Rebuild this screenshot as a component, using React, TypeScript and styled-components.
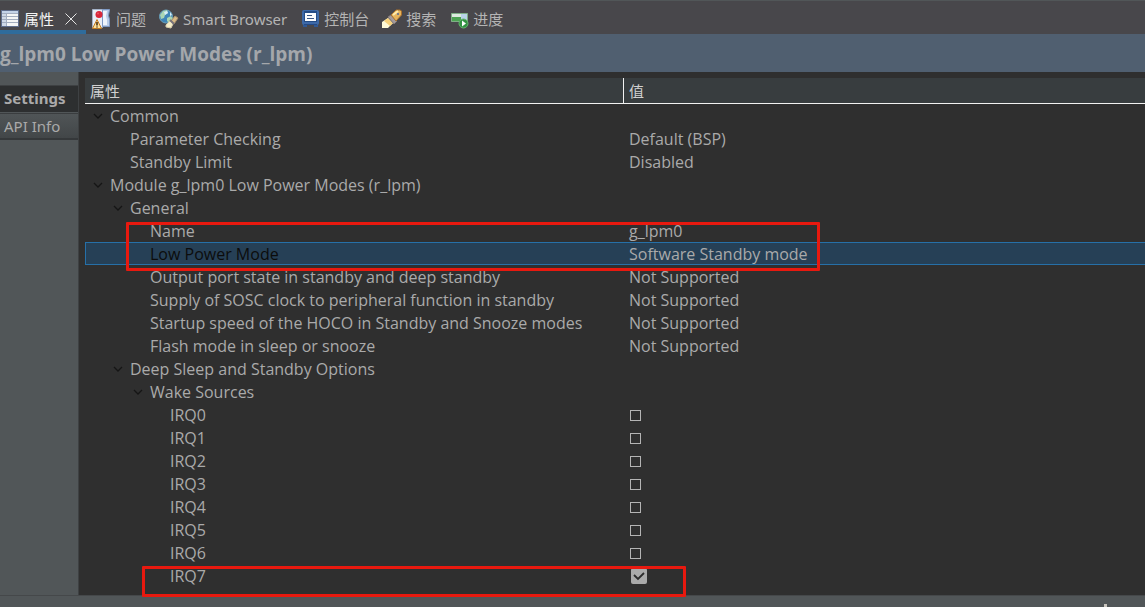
import React, { useState } from "react";
import styled, { createGlobalStyle, css } from "styled-components";

const GlobalStyle = createGlobalStyle`
  * { box-sizing: border-box; }
  body {
    margin: 0;
    background: #515658;
    color: #aaaaaa;
    font-family: "Noto Sans", "Noto Sans CJK SC", sans-serif;
    font-size: 15px;
  }
  button { font: inherit; color: inherit; border: 0; padding: 0; background: none; }
`;

const Page = styled.div`
  min-height: 100vh;
  display: flex;
  flex-direction: column;
`;

const TabBar = styled.div`
  display: flex;
  height: 34px;
  background: #48474b;
  border-top: 1px solid #515658;
`;

const TabShell = styled.div<{ $active?: boolean }>`
  display: flex;
  align-items: center;
  gap: 11px;
  padding: ${(p) => (p.$active ? "6px 9px 0 0" : "6px 7px 0 6px")};
  color: ${(p) => (p.$active ? "#f4f4f4" : "#b4b4b4")};
  border-bottom: 4px solid ${(p) => (p.$active ? "#2f6c9c" : "transparent")};
`;

const TabButton = styled.button`
  display: flex;
  align-items: center;
  gap: 4px;
  line-height: 20px;
  white-space: nowrap;
`;

const CloseButton = styled.button`
  display: flex;
`;

const TitleBar = styled.h1`
  margin: 0;
  height: 38px;
  padding-top: 2px;
  background: #505f70;
  color: #a4a7ab;
  font-family: "Open Sans", "Noto Sans CJK SC", sans-serif;
  font-size: 19px;
  font-weight: 700;
  line-height: 36px;
`;

const Body = styled.div`
  flex: 1;
  display: flex;
`;

const SideTabs = styled.nav`
  flex: none;
  width: 79px;
  padding-top: 13px;
  border-right: 1px solid #3e4143;
`;

const SideTab = styled.button<{ $active?: boolean }>`
  display: block;
  width: 100%;
  height: 27px;
  padding-left: 4px;
  text-align: left;
  line-height: 24px;
  ${(p) =>
    p.$active
      ? css`
          padding-bottom: 2px;
          background: #2d2f30;
          border-top: 1px solid #3e4143;
          font-weight: 700;
        `
      : css`
          margin-top: 1px;
          background: linear-gradient(#505557, #424648);
          border-top: 1px solid #3a3d3f;
          border-bottom: 2px solid #35383a;
        `}
`;

const Panel = styled.main`
  position: relative;
  flex: 1;
  min-width: 0;
  padding: 6px 0 8px 6px;
  background: #2f2f2f;
`;

const PropertyTable = styled.table`
  width: 100%;
  table-layout: fixed;
  border-collapse: separate;
  border-spacing: 0;
`;

const NameColumn = styled.col`
  width: 538px;
`;

const HeadCell = styled.th`
  height: 26px;
  padding: 2px 5px 0;
  background: #383d3f;
  border-bottom: 1px solid #f2f2f2;
  color: #d0d0d0;
  font-weight: 400;
  line-height: 23px;
  text-align: left;
  & + & { border-left: 1px solid #f2f2f2; }
`;

const Cell = styled.td<{ $selected?: boolean }>`
  height: 23px;
  padding: 1px 6px 0;
  font-family: "Open Sans", "Noto Sans CJK SC", sans-serif;
  font-size: 16px;
  line-height: 20px;
  border: solid transparent;
  border-width: 1px 0;
  white-space: nowrap;
  ${(p) =>
    p.$selected &&
    css`
      background: #264056;
      border-color: #2670a8;
    `}
`;

const NameCell = styled(Cell)<{ $level: number }>`
  padding: 1px 0 0 ${(p) => 4 + p.$level * 20}px;
  border-left-width: 1px;
  color: ${(p) => (p.$selected ? "#0c0c0c" : "inherit")};
`;

const NameContent = styled.label`
  display: flex;
  align-items: center;
`;

const Toggle = styled.span`
  flex: none;
  display: flex;
  width: 20px;
  padding-left: 2px;
`;

const Check = styled.input`
  appearance: none;
  display: block;
  width: 11px;
  height: 11px;
  margin: 0 1px;
  border: 1px solid #b4b4b4;
  &:checked {
    width: 16px;
    height: 16px;
    margin: 0 2px;
    border: 0;
    border-radius: 2px;
    background: #aaaaaa;
  }
`;

const CheckWrap = styled.span`
  position: relative;
  display: block;
`;

const Tick = styled.svg`
  position: absolute;
  left: 2px;
  top: 0;
  pointer-events: none;
`;

const Highlight = styled.div<{ $left: number; $top: number; $width: number; $height: number }>`
  position: absolute;
  left: ${(p) => p.$left}px;
  top: ${(p) => p.$top}px;
  width: ${(p) => p.$width}px;
  height: ${(p) => p.$height}px;
  border: 3px solid #e8190f;
  border-radius: 1px;
  pointer-events: none;
`;

const StatusBar = styled.footer`
  display: flex;
  justify-content: flex-end;
  align-items: flex-end;
  height: 12px;
  padding-right: 38px;
  border-top: 1px solid #45484a;
`;

const Grip = styled.span`
  width: 3px;
  height: 3px;
  background: #c8c4bd;
`;

const PropertiesIcon = () => (
  <svg width="20" height="20" viewBox="0 0 20 20" aria-hidden="true">
    <path fill="#5f6d8c" d="M1 1h18v17H1z" />
    <path fill="#c3d2e8" d="M2 2h16v3H2z" />
    <path fill="#f4f5f6" d="M2 5h16v12H2z" />
    <path fill="#cfd8e6" d="M2 5h4v12H2z" />
    <path stroke="#a3adbf" d="M2 4.500h16M2 7.500h16M2 10.500h16M2 13.500h16M6.500 4v13" />
  </svg>
);

const ProblemsIcon = () => (
  <svg width="20" height="20" viewBox="0 0 20 20" aria-hidden="true">
    <path fill="#e9eef6" stroke="#a5b3c9" d="M.500 .5h10v18h-10z" />
    <path fill="#b9cce8" stroke="#7e99c4" d="M10.500 .5h7l-1 6 1 4v7h-7z" />
    <path fill="#eef4fc" d="M11 2h4l-1 5 1 4v5h-4z" />
    <circle cx="7" cy="5.500" r="3.500" fill="#d9273a" />
    <circle cx="6" cy="4.500" r="1" fill="#e85560" />
    <path fill="#ffe39a" stroke="#c17b23" strokeLinejoin="round" d="M5 10.500 9.500 19.500H.5z" />
    <path stroke="#3b2710" strokeWidth="1.500" d="M5 13v3.500M5 17.500v1" />
  </svg>
);

const BrowserIcon = () => (
  <svg width="20" height="20" viewBox="0 0 20 20" aria-hidden="true">
    <circle cx="7" cy="7.500" r="6.500" fill="#3e85b8" stroke="#6da4bd" />
    <path fill="#a9d5b4" d="M1 6 4 2l4-1 1 3-3 2-1 3-3 1zM8 9l4-2 2 3-4 4-2-2z" />
    <path fill="#d6edfa" d="M5 3l3-1 1 2-3 2zM11 3l2 3-2 1z" />
    <path fill="#f5edc7" stroke="#d8ccab" d="m7 16 4-4 3 3-2 4-5-1z" />
    <path fill="#d9ba87" stroke="#a68f6c" d="m12 12 4-5 3 2-4 6z" />
    <path stroke="#77727a" strokeWidth="2" d="m11 11 4 4" />
  </svg>
);

const ConsoleIcon = () => (
  <svg width="20" height="20" viewBox="0 0 20 20" aria-hidden="true">
    <rect x="2" y="1" width="17" height="15" rx="2" fill="#3d69a8" />
    <path fill="#244c86" d="M4 2h13v11H4z" />
    <path fill="#fafcfe" d="M5 4h11v8H5z" />
    <path stroke="#3a5686" d="M7 6.500h5M7 9.500h7" />
    <path fill="#254983" d="M4 15h13v1H4z" />
    <path fill="#2f5894" d="M3 16h4v2H3zM14 16h4v2h-4z" />
  </svg>
);

const SearchIcon = () => (
  <svg width="20" height="20" viewBox="0 0 20 20" aria-hidden="true">
    <path fill="#fffbd8" d="m0 13 6-4 5 5-5 5H0z" />
    <path fill="#f7d27c" d="m2 12 4-3 5 5-3 3z" />
    <path fill="#a49b9b" stroke="#837a7a" d="m6 8 3-2 6 6-3 3z" />
    <path fill="#e6b45d" stroke="#a8702c" d="m9 6 5-5h4l1.500 1v4L14 12z" />
    <path stroke="#ffebaa" strokeWidth="2" d="m11 6 5-4" />
    <circle cx="16" cy="5" r="1" fill="#52699b" />
  </svg>
);

const ProgressIcon = () => (
  <svg width="20" height="20" viewBox="0 0 20 20" aria-hidden="true">
    <path fill="#dceadf" stroke="#7faf86" d="M2.500 4.500h16v8h-16z" />
    <path fill="#4ca353" d="M3 8h9v4H3z" />
    <path fill="#b8d3e8" d="M12 5h6v7h-6z" />
    <circle cx="14.500" cy="14.500" r="4.500" fill="#329342" stroke="#65b66e" />
    <path fill="#fff" d="m13 11.500 4 3-4 3z" />
  </svg>
);

const Chevron = () => (
  <svg width="12" height="10" viewBox="0 0 12 10" aria-hidden="true">
    <path d="m2 3 4 4 4-4" fill="none" stroke="#151515" strokeWidth="1.300" />
  </svg>
);

const views: { label: string; Icon: React.FC }[] = [
  { label: "问题", Icon: ProblemsIcon },
  { label: "Smart Browser", Icon: BrowserIcon },
  { label: "控制台", Icon: ConsoleIcon },
  { label: "搜索", Icon: SearchIcon },
  { label: "进度", Icon: ProgressIcon },
];

type Row = { name: string; level: number; group?: boolean; value?: string; irq?: number };

const rows: Row[] = [
  { name: "Common", level: 0, group: true },
  { name: "Parameter Checking", level: 1, value: "Default (BSP)" },
  { name: "Standby Limit", level: 1, value: "Disabled" },
  { name: "Module g_lpm0 Low Power Modes (r_lpm)", level: 0, group: true },
  { name: "General", level: 1, group: true },
  { name: "Name", level: 2, value: "g_lpm0" },
  { name: "Low Power Mode", level: 2, value: "Software Standby mode" },
  { name: "Output port state in standby and deep standby", level: 2, value: "Not Supported" },
  { name: "Supply of SOSC clock to peripheral function in standby", level: 2, value: "Not Supported" },
  { name: "Startup speed of the HOCO in Standby and Snooze modes", level: 2, value: "Not Supported" },
  { name: "Flash mode in sleep or snooze", level: 2, value: "Not Supported" },
  { name: "Deep Sleep and Standby Options", level: 1, group: true },
  { name: "Wake Sources", level: 2, group: true },
  ...Array.from({ length: 8 }, (_, irq) => ({ name: `IRQ${irq}`, level: 3, irq })),
];

export default function App() {
  const [enabled, setEnabled] = useState<number[]>([7]);
  const toggle = (irq: number) =>
    setEnabled((list) => (list.includes(irq) ? list.filter((n) => n !== irq) : [...list, irq]));

  return (
    <Page>
      <GlobalStyle />
      <TabBar>
        <TabShell $active>
          <TabButton>
            <PropertiesIcon />
            属性
          </TabButton>
          <CloseButton aria-label="Close">
            <svg width="12" height="12" viewBox="0 0 12 12" aria-hidden="true">
              <path d="M.5.5l11 11M11.500.5l-11 11" stroke="#e4e4e4" />
            </svg>
          </CloseButton>
        </TabShell>
        {views.map(({ label, Icon }) => (
          <TabShell key={label}>
            <TabButton>
              <Icon />
              {label}
            </TabButton>
          </TabShell>
        ))}
      </TabBar>
      <TitleBar>g_lpm0 Low Power Modes (r_lpm)</TitleBar>
      <Body>
        <SideTabs>
          <SideTab $active>Settings</SideTab>
          <SideTab>API Info</SideTab>
        </SideTabs>
        <Panel>
          <PropertyTable>
            <colgroup>
              <NameColumn />
              <col />
            </colgroup>
            <thead>
              <tr>
                <HeadCell>属性</HeadCell>
                <HeadCell>值</HeadCell>
              </tr>
            </thead>
            <tbody>
              {rows.map((row) => {
                const selected = row.name === "Low Power Mode";
                const checked = row.irq !== undefined && enabled.includes(row.irq);
                return (
                  <tr key={row.name}>
                    <NameCell $level={row.level} $selected={selected}>
                      <NameContent htmlFor={row.irq !== undefined ? row.name : undefined}>
                        <Toggle>{row.group && <Chevron />}</Toggle>
                        {row.name}
                      </NameContent>
                    </NameCell>
                    <Cell $selected={selected}>
                      {row.irq !== undefined ? (
                        <CheckWrap>
                          <Check
                            type="checkbox"
                            id={row.name}
                            checked={checked}
                            onChange={() => toggle(row.irq as number)}
                          />
                          {checked && (
                            <Tick width="16" height="16" viewBox="0 0 16 16" aria-hidden="true">
                              <path d="m3 7 4 4 6-6" fill="none" stroke="#2b2b2b" strokeWidth="1.800" />
                            </Tick>
                          )}
                        </CheckWrap>
                      ) : (
                        row.value
                      )}
                    </Cell>
                  </tr>
                );
              })}
            </tbody>
          </PropertyTable>
          <Highlight $left={47} $top={150} $width={694} $height={49} />
          <Highlight $left={63} $top={494} $width={544} $height={31} />
        </Panel>
      </Body>
      <StatusBar>
        <Grip />
      </StatusBar>
    </Page>
  );
}
